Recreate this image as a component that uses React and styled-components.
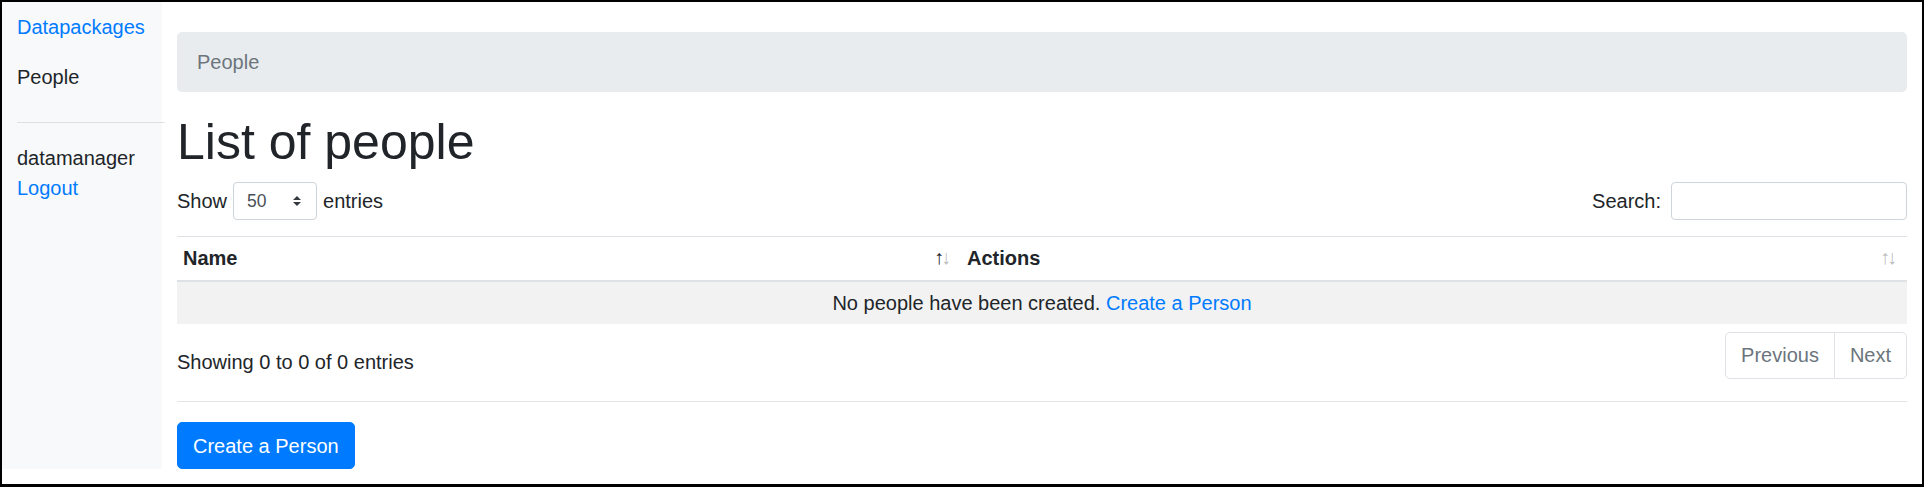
import React from "react";
import styled, { createGlobalStyle } from "styled-components";

const GlobalStyle = createGlobalStyle`
  *, *::before, *::after { box-sizing: border-box; }
  html, body { margin: 0; padding: 0; background: #fff; }
  body {
    font-family: "Liberation Sans", Arial, sans-serif;
    font-size: 20px;
    line-height: 1.5;
    color: #212529;
  }
`;

const Frame = styled.div`
  width: 1924px;
  height: 487px;
  border: 2px solid #000;
  border-bottom-width: 3px;
  background: #fff;
  overflow: hidden;
`;

const Row = styled.div`
  display: flex;
  align-items: stretch;
`;

const Sidebar = styled.nav`
  width: 160px;
  flex: 0 0 160px;
  background: #f8f9fa;
`;

const NavLink = styled.a`
  display: block;
  padding: 10px 15px;
  color: ${(p) => (p.$active ? "#212529" : "#007bff")};
  text-decoration: none;
`;

const Divider = styled.hr`
  margin: ${(p) => p.$margin || "20px 0"};
  border: 0;
  border-top: 1px solid rgba(0, 0, 0, 0.1);
  height: 0;
`;

const UserBlock = styled.div`
  padding: 0 15px;
`;

const UserName = styled.div``;

const Link = styled.a`
  color: #007bff;
  text-decoration: none;
`;

const Main = styled.main`
  flex: 1;
  padding: 30px 15px 0;
  min-width: 0;
`;

const Breadcrumb = styled.ol`
  list-style: none;
  margin: 0 0 20px;
  padding: 15px 20px;
  background: #e9ecef;
  border-radius: 5px;
  color: #6c757d;
`;

const Title = styled.h1`
  margin: 0 0 10px;
  font-size: 50px;
  font-weight: 500;
  line-height: 1.2;
`;

const Toolbar = styled.div`
  display: flex;
  justify-content: space-between;
  align-items: center;
  height: 37px;
`;

const Label = styled.label`
  display: flex;
  align-items: center;
  white-space: nowrap;
`;

const SelectWrap = styled.span`
  position: relative;
  display: inline-block;
  margin: 0 6px;
`;

const Select = styled.select`
  appearance: none;
  -webkit-appearance: none;
  width: 84px;
  height: 38px;
  padding: 0 30px 0 13px;
  font-family: inherit;
  font-size: 17.5px;
  color: #495057;
  background: #fff;
  border: 1px solid #ced4da;
  border-radius: 4px;
`;

const Caret = styled.svg`
  position: absolute;
  right: 16px;
  top: 14px;
  width: 8px;
  height: 10px;
  pointer-events: none;
`;

const SearchInput = styled.input`
  width: 236px;
  height: 38px;
  margin-left: 10px;
  padding: 5px 10px;
  font-family: inherit;
  font-size: 17.5px;
  border: 1px solid #ced4da;
  border-radius: 4px;
`;

const Table = styled.table`
  width: 100%;
  margin: 17px 0 6px;
  border-collapse: separate;
  border-spacing: 0;
`;

const Th = styled.th`
  position: relative;
  text-align: left;
  font-weight: 700;
  padding: 6px 30px 7px 6px;
  border-top: 1px solid #dee2e6;
  border-bottom: 2px solid #dee2e6;
  width: ${(p) => p.$width || "auto"};

  &::before,
  &::after {
    position: absolute;
    top: 5px;
    display: block;
    font-weight: 400;
    opacity: 0.3;
  }
  &::before {
    content: "\\2191";
    right: 17px;
    opacity: ${(p) => (p.$asc ? 1 : 0.3)};
  }
  &::after {
    content: "\\2193";
    right: 10px;
  }
`;

const EmptyCell = styled.td`
  padding: 6px;
  text-align: center;
  background: #f2f2f2;
`;

const Footer = styled.div`
  display: flex;
  justify-content: space-between;
  align-items: flex-start;
`;

const Info = styled.div`
  padding-top: 17px;
  white-space: nowrap;
`;

const Pagination = styled.ul`
  display: flex;
  list-style: none;
  margin: 2px 0;
  padding: 0;
`;

const PageLink = styled.li`
  padding: 10px 15px;
  line-height: 1.25;
  color: #6c757d;
  background: #fff;
  border: 1px solid #dee2e6;
  margin-left: ${(p) => (p.$first ? "0" : "-1px")};
  border-radius: ${(p) => (p.$first ? "5px 0 0 5px" : "0 5px 5px 0")};
`;

const Button = styled.button`
  display: inline-block;
  padding: 7.5px 15px;
  font-family: inherit;
  font-size: 20px;
  line-height: 1.5;
  color: #fff;
  background: #007bff;
  border: 1px solid #007bff;
  border-radius: 5px;
`;

export default function App() {
  return (
    <>
      <GlobalStyle />
      <Frame>
        <Row>
          <Sidebar>
            <NavLink href="#">Datapackages</NavLink>
            <NavLink href="#" $active>
              People
            </NavLink>
            <Divider $margin="20px -3px 20px 15px" />
            <UserBlock>
              <UserName>datamanager</UserName>
              <Link href="#">Logout</Link>
            </UserBlock>
          </Sidebar>
          <Main>
            <Breadcrumb>
              <li>People</li>
            </Breadcrumb>
            <Title>List of people</Title>
            <Toolbar>
              <Label>
                Show
                <SelectWrap>
                  <Select defaultValue="50">
                    <option value="10">10</option>
                    <option value="25">25</option>
                    <option value="50">50</option>
                    <option value="100">100</option>
                  </Select>
                  <Caret viewBox="0 0 4 5">
                    <path d="M2 0L0 2h4zm0 5L0 3h4z" fill="#343a40" />
                  </Caret>
                </SelectWrap>
                entries
              </Label>
              <Label>
                Search:
                <SearchInput type="search" />
              </Label>
            </Toolbar>
            <Table>
              <thead>
                <tr>
                  <Th $width="784px" $asc>
                    Name
                  </Th>
                  <Th>Actions</Th>
                </tr>
              </thead>
              <tbody>
                <tr>
                  <EmptyCell colSpan={2}>
                    No people have been created. <Link href="#">Create a Person</Link>
                  </EmptyCell>
                </tr>
              </tbody>
            </Table>
            <Footer>
              <Info>Showing 0 to 0 of 0 entries</Info>
              <Pagination>
                <PageLink $first>Previous</PageLink>
                <PageLink>Next</PageLink>
              </Pagination>
            </Footer>
            <Divider />
            <Button>Create a Person</Button>
          </Main>
        </Row>
      </Frame>
    </>
  );
}
